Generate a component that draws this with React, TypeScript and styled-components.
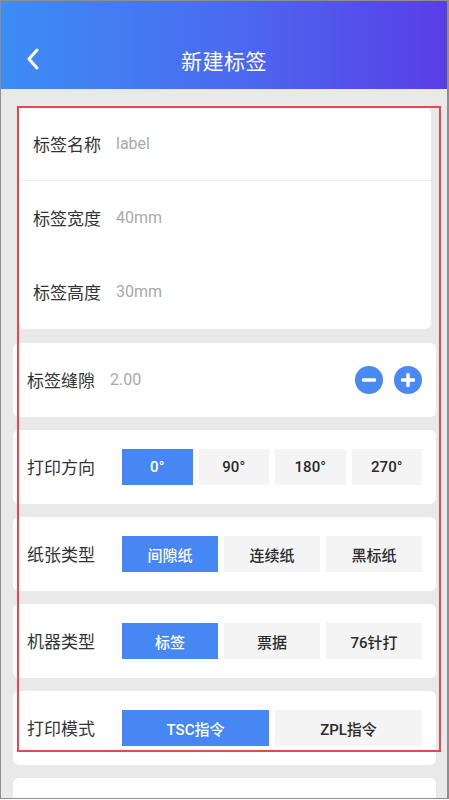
import React, { useState } from "react";
import styled, { createGlobalStyle } from "styled-components";

const GlobalStyle = createGlobalStyle`
	html, body {
		margin: 0;
		padding: 0;
		background: #ffffff;
	}
	body {
		font-family: "Noto Sans CJK SC", "Noto Sans", "Liberation Sans", sans-serif;
	}
	* {
		box-sizing: border-box;
	}
`;

const ORIENTATIONS = ["0°", "90°", "180°", "270°"];
const PAPERS = ["间隙纸", "连续纸", "黑标纸"];
const MACHINES = ["标签", "票据", "76针打"];
const MODES = ["TSC指令", "ZPL指令"];

const App = () => {
	const [gap, setGap] = useState(2);
	const [orientation, setOrientation] = useState(0);
	const [paper, setPaper] = useState(0);
	const [machine, setMachine] = useState(0);
	const [mode, setMode] = useState(0);

	return (
		<Page>
			<GlobalStyle />
			<Header>
				<BackButton aria-label="back">
					<svg width="14" height="22" viewBox="0 0 14 22">
						<path
							d="M11 2 L3 11 L11 20"
							fill="none"
							stroke="#fff"
							strokeWidth="3"
							strokeLinecap="round"
							strokeLinejoin="round"
						/>
					</svg>
				</BackButton>
				<Title>新建标签</Title>
			</Header>

			<Content>
				<InfoCard>
					<Row $divider>
						<Label>标签名称</Label>
						<Value>label</Value>
					</Row>
					<Row>
						<Label>标签宽度</Label>
						<Value>40mm</Value>
					</Row>
					<Row>
						<Label>标签高度</Label>
						<Value>30mm</Value>
					</Row>
				</InfoCard>

				<Card>
					<Label>标签缝隙</Label>
					<Value>{gap.toFixed(2)}</Value>
					<Stepper>
						<RoundButton aria-label="minus" onClick={() => setGap((g) => Math.max(0, g - 0.5))}>
							<svg width="28" height="28" viewBox="0 0 28 28">
								<circle cx="14" cy="14" r="14" fill="#4a89f3" />
								<rect x="7" y="12.3" width="14" height="3.4" rx="1" fill="#fff" />
							</svg>
						</RoundButton>
						<RoundButton aria-label="plus" onClick={() => setGap((g) => g + 0.5)}>
							<svg width="28" height="28" viewBox="0 0 28 28">
								<circle cx="14" cy="14" r="14" fill="#4a89f3" />
								<rect x="7" y="12.3" width="14" height="3.4" rx="1" fill="#fff" />
								<rect x="12.3" y="7" width="3.4" height="14" rx="1" fill="#fff" />
							</svg>
						</RoundButton>
					</Stepper>
				</Card>

				<Card>
					<FieldLabel>打印方向</FieldLabel>
					<Segments>
						{ORIENTATIONS.map((o, i) => (
							<Segment key={o} $active={i === orientation} onClick={() => setOrientation(i)}>
								{o}
							</Segment>
						))}
					</Segments>
				</Card>

				<Card>
					<FieldLabel>纸张类型</FieldLabel>
					<Segments>
						{PAPERS.map((p, i) => (
							<Segment key={p} $active={i === paper} onClick={() => setPaper(i)}>
								{p}
							</Segment>
						))}
					</Segments>
				</Card>

				<Card>
					<FieldLabel>机器类型</FieldLabel>
					<Segments>
						{MACHINES.map((m, i) => (
							<Segment key={m} $active={i === machine} onClick={() => setMachine(i)}>
								{m}
							</Segment>
						))}
					</Segments>
				</Card>

				<Card>
					<FieldLabel>打印模式</FieldLabel>
					<Segments>
						{MODES.map((m, i) => (
							<Segment key={m} $active={i === mode} onClick={() => setMode(i)}>
								{m}
							</Segment>
						))}
					</Segments>
				</Card>

				<Card>
					<FieldLabel>更多设置</FieldLabel>
					<MoreLink>点击展开</MoreLink>
				</Card>
			</Content>

			<Highlight />
		</Page>
	);
};

const Page = styled.div`
	position: relative;
	width: 449px;
	height: 799px;
	overflow: hidden;
	background: #e9e9e9;
	border: 1px solid #8e8e8e;
	border-right-width: 2px;
`;

const Header = styled.header`
	position: relative;
	height: 88px;
	display: flex;
	align-items: flex-end;
	justify-content: center;
	padding-bottom: 14px;
	background: linear-gradient(90deg, #3d8df5 0%, #4a6cf0 50%, #5a3de6 100%);
`;

const BackButton = styled.button`
	position: absolute;
	left: 20px;
	bottom: 18px;
	width: 24px;
	height: 24px;
	padding: 0;
	border: none;
	background: none;
	display: flex;
	align-items: center;
	justify-content: center;
	cursor: pointer;
`;

const Title = styled.h1`
	margin: 0;
	color: #ffffff;
	font-size: 21px;
	font-weight: 400;
	line-height: 30px;
	letter-spacing: 0.5px;
`;

const Content = styled.main`
	display: flex;
	flex-direction: column;
	gap: 13px;
	padding: 18px 11px 0 12px;
`;

const InfoCard = styled.section`
	margin: 0 5px 1px 6px;
	background: #ffffff;
	border-radius: 6px;
	display: flex;
	flex-direction: column;
`;

const Row = styled.div<{ $divider?: boolean }>`
	height: 74px;
	display: flex;
	align-items: center;
	padding: 0 14px;
	border-bottom: ${(p) => (p.$divider ? "1px solid #ededed" : "none")};
`;

const Card = styled.section`
	height: 74px;
	background: #ffffff;
	border-radius: 6px;
	display: flex;
	align-items: center;
	padding: 0 14px;
	flex-shrink: 0;
`;

const Label = styled.span`
	color: #333333;
	font-size: 17px;
	line-height: 24px;
	white-space: nowrap;
`;

const FieldLabel = styled(Label)`
	width: 95px;
	flex-shrink: 0;
`;

const Value = styled.span`
	margin-left: 15px;
	color: #a9a9a9;
	font-size: 16px;
	line-height: 24px;
	font-family: "Roboto", "Noto Sans CJK SC", sans-serif;
`;

const Stepper = styled.div`
	margin-left: auto;
	display: flex;
	gap: 11px;
`;

const RoundButton = styled.button`
	width: 28px;
	height: 28px;
	padding: 0;
	border: none;
	background: none;
	cursor: pointer;
	display: block;

	svg {
		display: block;
	}
`;

const Segments = styled.div`
	flex: 1;
	display: flex;
	gap: 6px;
`;

const Segment = styled.button<{ $active?: boolean }>`
	flex: 1;
	height: 36px;
	border: none;
	padding: 0;
	background: ${(p) => (p.$active ? "#4687f4" : "#f4f4f4")};
	color: ${(p) => (p.$active ? "#ffffff" : "#2a2a2a")};
	font-family: "Roboto", "Noto Sans CJK SC", sans-serif;
	font-size: 15px;
	font-weight: 500;
	cursor: pointer;
`;

const MoreLink = styled.span`
	margin-left: auto;
	margin-right: 22px;
	color: #4a89f3;
	font-size: 16px;
`;

const Highlight = styled.div`
	position: absolute;
	left: 16px;
	top: 105px;
	width: 424px;
	height: 646px;
	border: 2px solid #e5484d;
	pointer-events: none;
`;

export default App;
